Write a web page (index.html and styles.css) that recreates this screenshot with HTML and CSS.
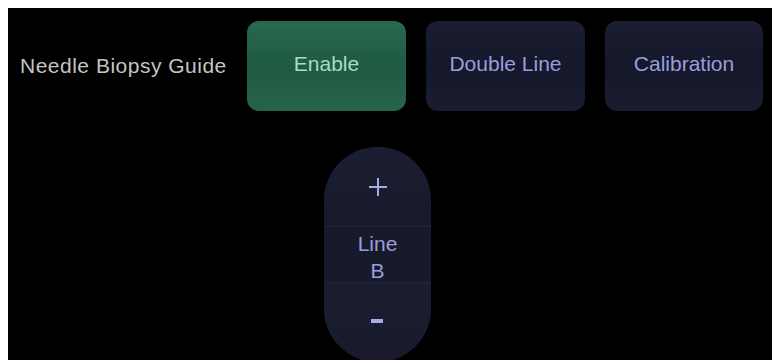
FILE: index.html
```html
<!DOCTYPE html>
<html lang="en">

<head>
  <meta charset="UTF-8">
  <meta name="viewport" content="width=device-width, initial-scale=1.0">
  <title>Needle Biopsy Guide</title>

  <link rel="stylesheet" href="styles.css">
</head>

<body>
  <div id="panel">
    <div class="guideRow">
      <span class="guideLabel">Needle Biopsy Guide</span>
      <button class="btn active">Enable</button>
      <button class="btn">Double Line</button>
      <button class="btn">Calibration</button>
    </div>

    <div class="lineStepper">
      <button class="step"><span class="plus"></span></button>
      <div class="stepValue">Line<br>B</div>
      <button class="step"><span class="minus"></span></button>
    </div>
  </div>
</body>

</html>
```

FILE: styles.css
```css
body {
  margin: 8px 0 0 8px;
  background: #fff;
  font-family: "Liberation Sans", Arial, sans-serif;
}
#panel {
  height: 352px;
  background: #000;
  padding: 13px 12px 0 12px;
  box-sizing: border-box;
  overflow: hidden;
}
.guideRow {
  display: grid;
  grid-template-columns: 207px 159px 159px 158px;
  column-gap: 20px;
  align-items: center;
}
.guideLabel {
  color: #c4c4c4;
  font-size: 21px;
  letter-spacing: 0.5px;
  margin-top: -1px;
  white-space: nowrap;
}
.btn {
  height: 90px;
  border: none;
  border-radius: 12px;
  font-family: inherit;
  font-size: 21px;
  color: #9a9ede;
  background: linear-gradient(#1b1d30, #15172a 50%, #1a1c2f);
  padding: 0 0 4px 0;
}
.btn.active {
  color: #a8dcc0;
  background: linear-gradient(#28694f, #1f5a42 50%, #266449);
}

.lineStepper {
  width: 107px;
  margin: 36px 0 0 304px;
  border-radius: 54px;
  overflow: hidden;
  background: #1a1c2e;
  display: flex;
  flex-direction: column;
}
.step {
  height: 79px;
  border: none;
  background: linear-gradient(#1b1d31, #181a2c);
  display: flex;
  align-items: center;
  justify-content: center;
}
.stepValue {
  border-top: 1px solid #23263b;
  border-bottom: 1px solid #23263b;
  color: #9a9ede;
  font-size: 21px;
  line-height: 27px;
  text-align: center;
  padding-top: 3px;
  height: 52px;
  background: #171a2b;
}
.plus {
  position: relative;
  width: 18px;
  height: 18px;
  display: block;
}
.plus::before,
.plus::after {
  content: "";
  position: absolute;
  background: #a6aae6;
}
.plus::before {
  left: 0;
  top: 8px;
  width: 18px;
  height: 2px;
}
.plus::after {
  left: 8px;
  top: 0;
  width: 2px;
  height: 18px;
}
.minus {
  display: block;
  width: 12px;
  height: 4px;
  margin: -4px 0 0 -2px;
  background: #a6aae6;
}
```
